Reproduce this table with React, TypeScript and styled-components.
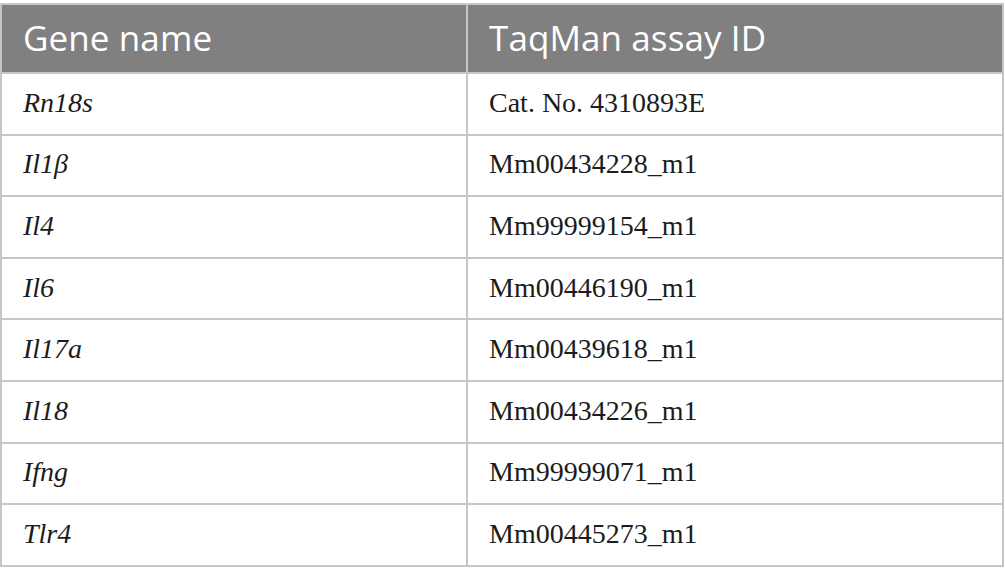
import React from "react";
import styled, { createGlobalStyle } from "styled-components";

const Global = createGlobalStyle`
  html, body { margin: 0; padding: 0; background: #ffffff; }
  body { padding-top: 3px; }
`;

const Table = styled.table`
  width: 1004px;
  border-collapse: collapse;
  table-layout: fixed;
  border: 2px solid #c6c6c6;
`;

const HeadCell = styled.th`
  height: 69px;
  padding: 0 0 3px 21px;
  background: #7f807f;
  color: #ffffff;
  font-family: "Open Sans", "Noto Sans", sans-serif;
  font-weight: 400;
  font-size: 35px;
  letter-spacing: 0.1px;
  text-align: left;
  vertical-align: middle;
  border: 2px solid #c6c6c6;
  box-sizing: border-box;
`;

const Cell = styled.td<{ $italic?: boolean }>`
  height: 61.6px;
  box-sizing: border-box;
  padding: 0 0 2px 21px;
  font-family: "Liberation Serif", "Times New Roman", serif;
  font-style: ${(p) => (p.$italic ? "italic" : "normal")};
  font-size: 28px;
  color: #1c1c1c;
  text-align: left;
  vertical-align: middle;
  border: 2px solid #c6c6c6;
`;

const FirstCol = styled.col`
  width: 466px;
`;

const rows: [string, string][] = [
  ["Rn18s", "Cat. No. 4310893E"],
  ["Il1β", "Mm00434228_m1"],
  ["Il4", "Mm99999154_m1"],
  ["Il6", "Mm00446190_m1"],
  ["Il17a", "Mm00439618_m1"],
  ["Il18", "Mm00434226_m1"],
  ["Ifng", "Mm99999071_m1"],
  ["Tlr4", "Mm00445273_m1"],
];

export default function App() {
  return (
    <>
      <Global />
      <Table>
        <colgroup>
          <FirstCol />
          <col />
        </colgroup>
        <thead>
          <tr>
            <HeadCell>Gene name</HeadCell>
            <HeadCell>TaqMan assay ID</HeadCell>
          </tr>
        </thead>
        <tbody>
          {rows.map(([gene, id]) => (
            <tr key={gene}>
              <Cell $italic>{gene}</Cell>
              <Cell>{id}</Cell>
            </tr>
          ))}
        </tbody>
      </Table>
    </>
  );
}
